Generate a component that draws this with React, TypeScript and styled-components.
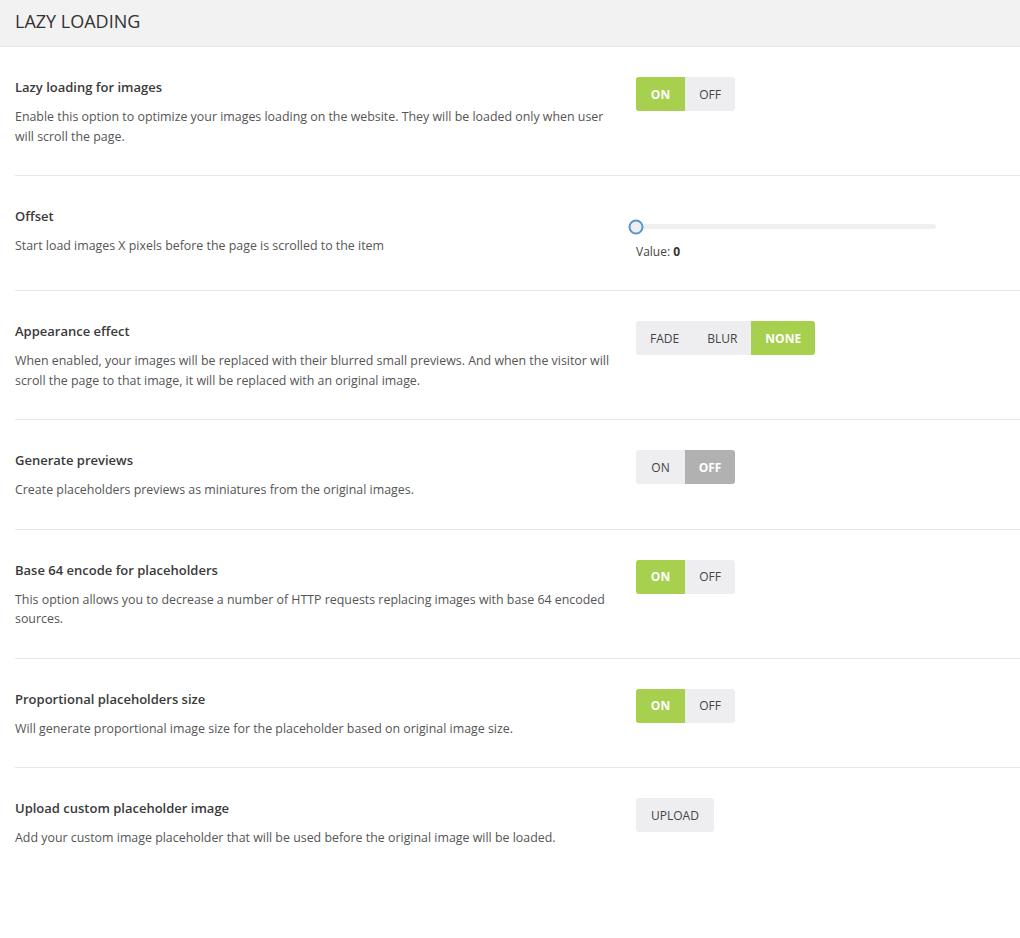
import React, { useState } from 'react';
import styled, { createGlobalStyle } from 'styled-components';

const GlobalStyle = createGlobalStyle`
  body {
    margin: 0;
    background: #fff;
    font-family: 'Open Sans', 'Noto Sans', sans-serif;
    color: #444;
  }
`;

const Panel = styled.div`
  width: 1020px;
  background: #fff;
`;

const PanelHeader = styled.div`
  height: 41px;
  background: #f2f2f2;
  border-bottom: 1px solid #e6e6e6;
  display: flex;
  align-items: center;
  padding: 0 15px 5px;
`;

const PanelTitle = styled.h2`
  margin: 0;
  font-size: 18px;
  font-weight: 400;
  color: #333;
`;

const Row = styled.div<{ $last?: boolean }>`
  display: grid;
  grid-template-columns: 600px 1fr;
  column-gap: 21px;
  margin-left: 15px;
  padding: 30px 0 29px;
  border-bottom: ${p => (p.$last ? 'none' : '1px solid #e8e8e8')};
`;

const Info = styled.div`
  display: flex;
  flex-direction: column;
  gap: 10px;
`;

const OptionTitle = styled.div`
  font-size: 13px;
  line-height: 20px;
  font-weight: 600;
  color: #3a3a3a;
`;

const OptionDesc = styled.div`
  font-size: 12.4px;
  line-height: 19.5px;
  color: #555;
`;

const Control = styled.div`
  display: flex;
  flex-direction: column;
  align-items: flex-start;
`;

const Group = styled.div`
  display: inline-flex;
  border-radius: 3px;
  overflow: hidden;
  background: #eeeef0;
`;

const Seg = styled.button<{ $active?: boolean; $tone?: 'green' | 'gray'; $w?: number }>`
  height: 34px;
  width: ${p => (p.$w ? `${p.$w}px` : 'auto')};
  padding: ${p => (p.$w ? '0' : '0 14px')};
  border: none;
  margin: 0;
  font-family: inherit;
  font-size: 12px;
  text-transform: uppercase;
  cursor: pointer;
  font-weight: ${p => (p.$active ? 700 : 400)};
  color: ${p => (p.$active ? '#fff' : '#444')};
  background: ${p =>
    p.$active ? (p.$tone === 'gray' ? '#b1b1b1' : '#a6d04d') : 'transparent'};
`;

const UploadButton = styled.button`
  height: 34px;
  padding: 0 15px;
  border: none;
  border-radius: 3px;
  background: #eeeef0;
  color: #444;
  font-family: inherit;
  font-size: 12px;
  cursor: pointer;
`;

const SliderWrap = styled.div`
  width: 300px;
  padding-top: 18px;
`;

const Track = styled.div`
  position: relative;
  height: 5px;
  border-radius: 3px;
  background: #efefef;
`;

const Thumb = styled.div`
  position: absolute;
  top: 50%;
  width: 11px;
  height: 11px;
  border-radius: 50%;
  background: #eceef1;
  border: 2px solid #5b95cf;
  transform: translate(-50%, -50%);
`;

const SliderValue = styled.div`
  margin-top: 14px;
  font-size: 12px;
  line-height: 18px;
  color: #444;

  b {
    font-weight: 700;
    color: #333;
  }
`;

type ToggleProps = { value: boolean; onChange: (v: boolean) => void };

const Toggle: React.FC<ToggleProps> = ({ value, onChange }) => (
  <Group>
    <Seg $w={49} $active={value} $tone="green" onClick={() => onChange(true)}>
      On
    </Seg>
    <Seg $w={50} $active={!value} $tone="gray" onClick={() => onChange(false)}>
      Off
    </Seg>
  </Group>
);

const effects = ['fade', 'blur', 'none'];

const App: React.FC = () => {
  const [lazy, setLazy] = useState(true);
  const [offset] = useState(0);
  const [effect, setEffect] = useState('none');
  const [previews, setPreviews] = useState(false);
  const [base64, setBase64] = useState(true);
  const [proportional, setProportional] = useState(true);

  return (
    <Panel>
      <GlobalStyle />
      <PanelHeader>
        <PanelTitle>LAZY LOADING</PanelTitle>
      </PanelHeader>

      <Row>
        <Info>
          <OptionTitle>Lazy loading for images</OptionTitle>
          <OptionDesc>
            Enable this option to optimize your images loading on the website. They will be loaded
            only when user will scroll the page.
          </OptionDesc>
        </Info>
        <Control>
          <Toggle value={lazy} onChange={setLazy} />
        </Control>
      </Row>

      <Row>
        <Info>
          <OptionTitle>Offset</OptionTitle>
          <OptionDesc>Start load images X pixels before the page is scrolled to the item</OptionDesc>
        </Info>
        <Control>
          <SliderWrap>
            <Track>
              <Thumb style={{ left: `${offset}%` }} />
            </Track>
            <SliderValue>
              Value: <b>{offset}</b>
            </SliderValue>
          </SliderWrap>
        </Control>
      </Row>

      <Row>
        <Info>
          <OptionTitle>Appearance effect</OptionTitle>
          <OptionDesc>
            When enabled, your images will be replaced with their blurred small previews. And when
            the visitor will scroll the page to that image, it will be replaced with an original
            image.
          </OptionDesc>
        </Info>
        <Control>
          <Group>
            {effects.map(e => (
              <Seg key={e} $active={effect === e} onClick={() => setEffect(e)}>
                {e}
              </Seg>
            ))}
          </Group>
        </Control>
      </Row>

      <Row>
        <Info>
          <OptionTitle>Generate previews</OptionTitle>
          <OptionDesc>Create placeholders previews as miniatures from the original images.</OptionDesc>
        </Info>
        <Control>
          <Toggle value={previews} onChange={setPreviews} />
        </Control>
      </Row>

      <Row>
        <Info>
          <OptionTitle>Base 64 encode for placeholders</OptionTitle>
          <OptionDesc>
            This option allows you to decrease a number of HTTP requests replacing images with base
            64 encoded sources.
          </OptionDesc>
        </Info>
        <Control>
          <Toggle value={base64} onChange={setBase64} />
        </Control>
      </Row>

      <Row>
        <Info>
          <OptionTitle>Proportional placeholders size</OptionTitle>
          <OptionDesc>
            Will generate proportional image size for the placeholder based on original image size.
          </OptionDesc>
        </Info>
        <Control>
          <Toggle value={proportional} onChange={setProportional} />
        </Control>
      </Row>

      <Row $last>
        <Info>
          <OptionTitle>Upload custom placeholder image</OptionTitle>
          <OptionDesc>
            Add your custom image placeholder that will be used before the original image will be
            loaded.
          </OptionDesc>
        </Info>
        <Control>
          <UploadButton>UPLOAD</UploadButton>
        </Control>
      </Row>
    </Panel>
  );
};

export default App;
